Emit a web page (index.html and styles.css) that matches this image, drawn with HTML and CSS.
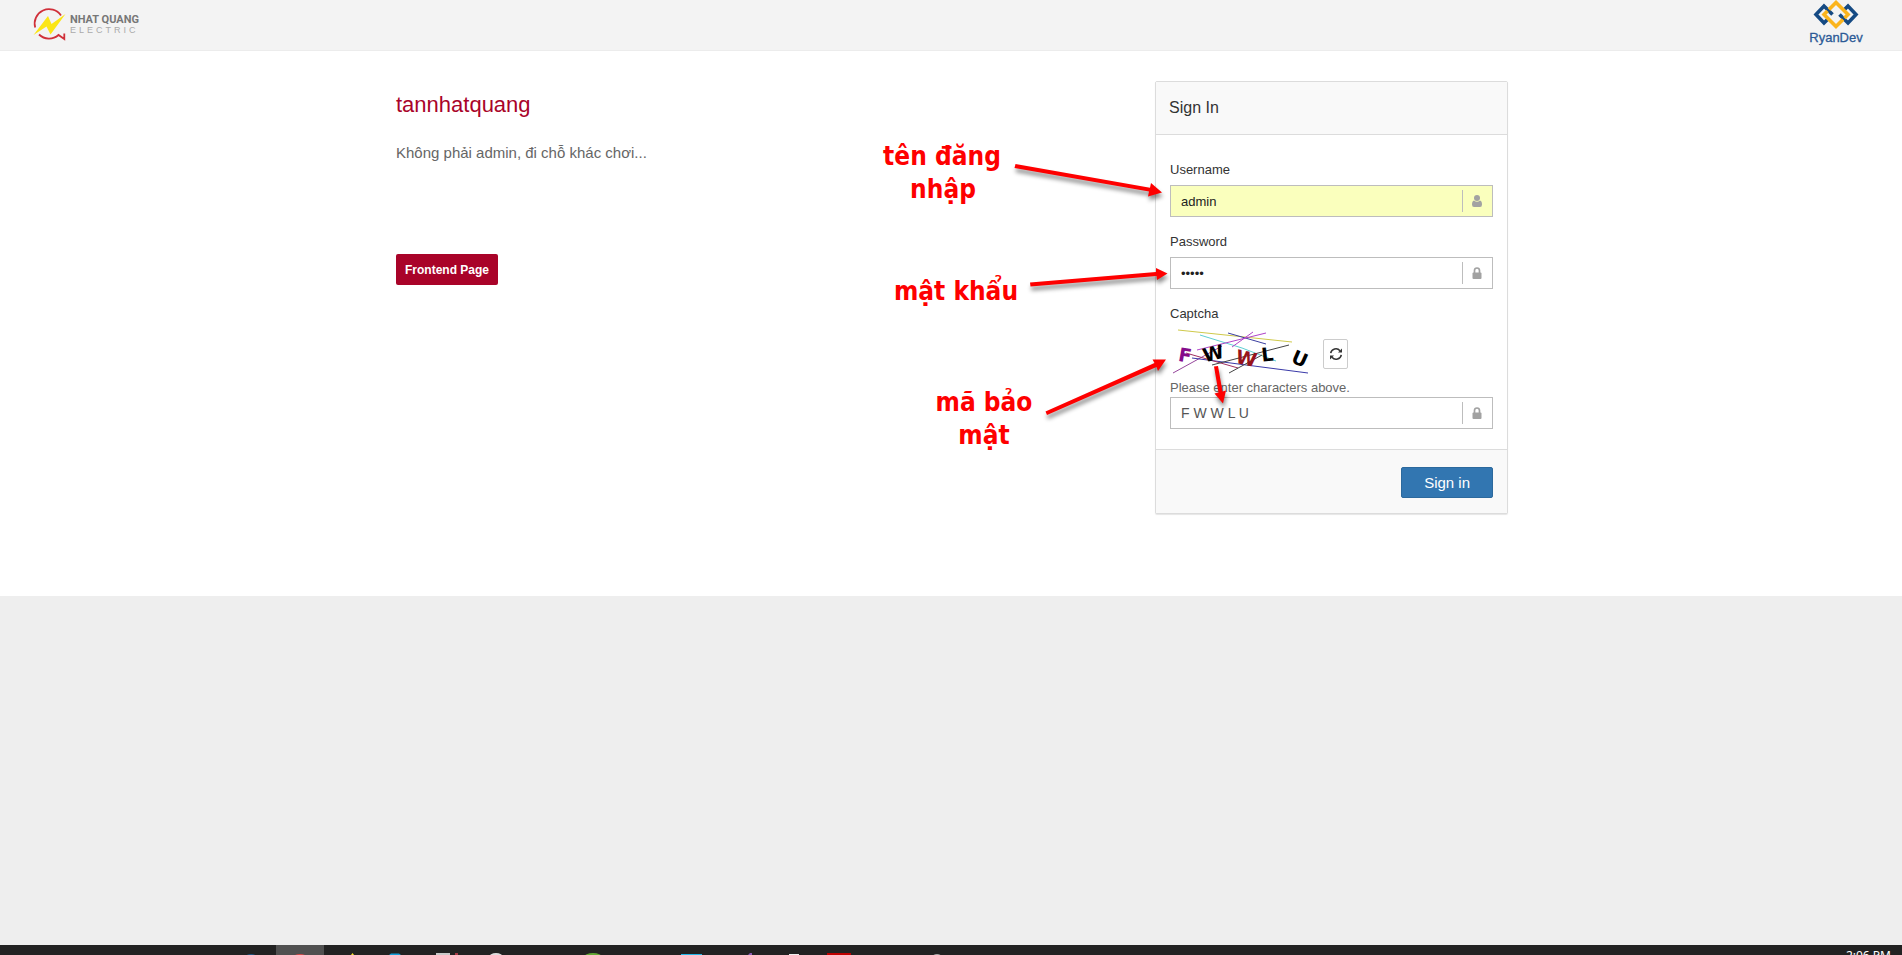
FILE: index.html
```
<!DOCTYPE html>
<html lang="vi">
<head>
<meta charset="utf-8">
<meta name="viewport" content="width=device-width, initial-scale=1">
<title>Sign In</title>
<link rel="stylesheet" href="styles.css">
</head>
<body>
<header class="topbar">
  <svg class="brand" width="112" height="36" viewBox="32 6 112 36" role="img" aria-label="Nhat Quang Electric">
    <path d="M35.200 27.500A14.400 14.400 0 0 1 61 15.500M39 34.500A14.400 14.400 0 0 0 58.500 35L64.300 39V33.500" fill="none" stroke="#d0303a" stroke-width="1.800"/>
    <path d="M33.500 35 48 16 51.500 24 65.500 14 50.500 34.500 46.500 26.500Z" fill="#fbe616"/>
    <text class="brand-name" x="70" y="23">NHAT QUANG</text>
    <text class="brand-sub" x="70" y="32.500">ELECTRIC</text>
  </svg>
  <svg class="partner" width="56" height="48" viewBox="1808 0 56 48" role="img" aria-label="RyanDev">
    <g fill="none" stroke-width="3.600">
      <path d="M1832.500 14.500 1824 6 1816 14.500 1824 23 1829 18" stroke="#154a83"/>
      <path d="M1843 11 1848 6 1856 14.500 1848 23 1839.500 14.500" stroke="#154a83"/>
      <path d="M1829 9.500 1836 2.500 1848 14.500 1844.500 18M1827.500 11 1824 14.500 1836 26.500 1843 19.500" stroke="#fbb41c"/>
    </g>
    <text class="partner-name" x="1836" y="42" text-anchor="middle">RyanDev</text>
  </svg>
</header>

<main class="main">
  <div class="container">
    <section class="intro">
      <h1 class="intro-title">tannhatquang</h1>
      <p class="intro-text">Không phải admin, đi chỗ khác chơi...</p>
      <a class="frontend-link" href="#">Frontend Page</a>
    </section>

    <form class="card">
      <h2 class="card-head">Sign In</h2>
      <div class="card-body">
        <div class="field">
          <label class="label" for="username">Username</label>
          <div class="control control-filled">
            <input class="input" id="username" type="text" value="admin">
            <span class="addon"><svg width="12" height="12" viewBox="0 0 12 12"><circle cx="6" cy="3" r="3" fill="#a2a2a2"/><path d="M3 5.500Q6 8 9 5.500 11 6 11 9.500 11 12 9 12H3Q1 12 1 9.500 1 6 3 5.500Z" fill="#a2a2a2"/></svg></span>
          </div>
        </div>
        <div class="field">
          <label class="label" for="password">Password</label>
          <div class="control">
            <input class="input" id="password" type="password" value="admin">
            <span class="addon"><svg width="12" height="12" viewBox="0 0 12 12"><path d="M3.500 6V3.500a2.500 2.500 0 0 1 5 0V6" fill="none" stroke="#a2a2a2" stroke-width="1.700"/><rect x="1.500" y="5.500" width="9" height="6.500" rx="1" fill="#a2a2a2"/></svg></span>
          </div>
        </div>
        <div class="field">
          <label class="label" for="captcha">Captcha</label>
          <div class="captcha-row">
            <svg class="captcha" width="145" height="50" viewBox="1170 328 145 50" role="img" aria-label="F W W L U">
              <g fill="none" stroke-width="1">
                <path d="M1178 329 1292 341" stroke="#cfc94a"/>
                <path d="M1200 334 1242 347 1276 360" stroke="#5ecfd2"/>
                <path d="M1228 332 1266 343" stroke="#3c3fa0"/>
                <path d="M1197 349 1266 332M1232 346 1253 331" stroke="#b044c8"/>
                <path d="M1173 372 1222 345" stroke="#96469c"/>
                <path d="M1192 357 1308 372" stroke="#3a3aa8"/>
                <path d="M1186 352 1238 367" stroke="#a03060"/>
                <path d="M1212 364 1289 344" stroke="#444"/>
                <path d="M1229 372 1262 354" stroke="#444"/>
              </g>
              <g class="captcha-text" text-anchor="middle">
                <text transform="translate(1184 361) rotate(10)" fill="#850b8b">F</text>
                <text transform="translate(1215 359) rotate(-14)">W</text>
                <text transform="translate(1245 364) rotate(12)" fill="#98131b">W</text>
                <text transform="translate(1268 360) rotate(-6)">L</text>
                <text transform="translate(1297 364) rotate(24)">U</text>
              </g>
            </svg>
            <button class="refresh" type="button" aria-label="Refresh"><svg width="14" height="14" viewBox="0 0 14 14"><path d="M1.700 6.200A5.300 5.300 0 0 1 11 3.700M12.300 7.800A5.300 5.300 0 0 1 3 10.300" fill="none" stroke="#333" stroke-width="1.500"/><path d="M13 1.500V5.500H9ZM1 12.500V8.500H5Z" fill="#333"/></svg></button>
          </div>
          <p class="hint">Please enter characters above.</p>
          <div class="control">
            <input class="input input-captcha" id="captcha" type="text" value="F W W L U">
            <span class="addon"><svg width="12" height="12" viewBox="0 0 12 12"><path d="M3.500 6V3.500a2.500 2.500 0 0 1 5 0V6" fill="none" stroke="#a2a2a2" stroke-width="1.700"/><rect x="1.500" y="5.500" width="9" height="6.500" rx="1" fill="#a2a2a2"/></svg></span>
          </div>
        </div>
      </div>
      <div class="card-foot">
        <button class="submit" type="submit">Sign in</button>
      </div>
    </form>

    <svg class="notes" width="640" height="420" viewBox="868 51 640 420">
      <g class="arrows">
        <path d="M1015.500 164 1150 187.700 1151 183 1162 192.500 1148 196.500 1149 191.500 1014.500 168Z"/>
        <path d="M1030 282.500 1156 272 1156 268 1167.500 273.500 1157 280 1156.500 276 1030.500 286.500Z"/>
        <path d="M1045.500 411.500 1154.500 363 1152.500 359.500 1166 359.500 1158 371 1156.500 367 1047 415Z"/>
        <path d="M1214 366.500 1218 366 1222.500 391.500 1226 390.500 1223 403.500 1214.500 393.500 1218.500 392.500Z"/>
      </g>
      <g class="note-text" text-anchor="middle">
        <text x="942" y="165">tên đăng</text>
        <text x="943" y="198">nhập</text>
        <text x="956" y="300">mật khẩu</text>
        <text x="984" y="411">mã bảo</text>
        <text x="984" y="444">mật</text>
      </g>
    </svg>
  </div>
</main>

<footer class="taskbar">
  <svg class="apps" width="960" height="10" viewBox="0 0 960 10" aria-hidden="true">
    <rect x="276" width="48" height="10" fill="#505050"/>
    <ellipse cx="251" cy="12" rx="6" ry="3" fill="#1d5686"/>
    <ellipse cx="300" cy="12" rx="7" ry="3" fill="#d94a4a"/>
    <path d="M351 10 352.500 8 354 10Z" fill="#f4e229"/>
    <path d="M389 10 391 8.500H399L401 10Z" fill="#149dd8"/>
    <path d="M436 8H450V10H436Z" fill="#c9c9c9"/><path d="M455 8H458V10H455Z" fill="#a83a45"/>
    <ellipse cx="496" cy="12" rx="7" ry="4" fill="#ddd"/>
    <ellipse cx="593" cy="12" rx="9" ry="4" fill="#61a834"/>
    <path d="M681 9H702V10H681Z" fill="#20b6e8"/>
    <path d="M748 10 750 8H752V10Z" fill="#8a5cb5"/>
    <path d="M789 9H799V10H789Z" fill="#eee"/>
    <path d="M827 8H851V10H827Z" fill="#bf0000"/>
    <ellipse cx="937" cy="12" rx="5" ry="3" fill="#aaa"/>
  </svg>
  <time class="clock">2:06 PM</time>
</footer>
</body>
</html>
```

FILE: styles.css
```
* {
  box-sizing: border-box;
}

body {
  margin: 0;
  min-height: 100vh;
  display: flex;
  flex-direction: column;
  background: #eee;
  color: #333;
  font: 13px/20px "Liberation Sans", Arial, sans-serif;
}

.topbar {
  display: flex;
  justify-content: space-between;
  align-items: flex-start;
  height: 51px;
  padding: 0 38px 0 32px;
  background: #f3f3f3;
  border-bottom: 1px solid #ececec;
}

.brand {
  margin-top: 6px;
}

.brand-name {
  font: bold 11px Roboto, "Liberation Sans", sans-serif;
  fill: #777;
}

.brand-sub {
  font: 9px "Liberation Sans", sans-serif;
  letter-spacing: 3px;
  fill: #aaa;
}

.partner-name {
  font: 13px "Liberation Sans", sans-serif;
  fill: #2c5a96;
  stroke: #2c5a96;
  stroke-width: 0.3px;
}

.main {
  background: #fff;
  padding: 30px 20px 82px;
}

.container {
  position: relative;
  display: flex;
  justify-content: space-between;
  align-items: flex-start;
  max-width: 1114px;
  margin: 0 auto;
  padding-left: 2px;
}

.intro-title {
  margin: 9px 0 0;
  font-size: 22px;
  line-height: 30px;
  font-weight: normal;
  color: #a90329;
}

.intro-text {
  margin: 23px 0 91px;
  font-size: 15px;
  line-height: 20px;
  color: #666;
}

.frontend-link {
  display: inline-block;
  padding: 1px 9px 0;
  border-radius: 2px;
  background: #a90329;
  color: #fff;
  font-size: 12px;
  line-height: 30px;
  font-weight: bold;
  text-decoration: none;
}

.card {
  width: 353px;
  border: 1px solid #dcdcdc;
  border-radius: 2px;
  background: #fff;
  box-shadow: 0 1px 1px rgba(0, 0, 0, 0.1);
}

.card-head {
  margin: 0;
  padding: 14px 13px;
  border-bottom: 1px solid #dcdcdc;
  background: #f9f9f9;
  font-size: 16px;
  line-height: 24px;
  font-weight: normal;
}

.card-body {
  padding: 25px 14px 20px;
}

.field + .field {
  margin-top: 15px;
}

.label {
  display: block;
  margin-bottom: 5px;
}

.control {
  display: flex;
  align-items: center;
  height: 32px;
  border: 1px solid #bdbdbd;
  background: #fff;
}

.control-filled {
  background: #faffbd;
}

.input {
  flex: 1;
  min-width: 0;
  height: 30px;
  padding: 0 10px;
  border: 0;
  outline: 0;
  background: transparent;
  color: #222;
  font: 13px "Liberation Sans", Arial, sans-serif;
}

.input-captcha {
  color: #555;
  font-size: 14px;
}

.addon {
  display: flex;
  align-items: center;
  height: 22px;
  padding: 0 9px 0 8px;
  border-left: 1px solid #bdbdbd;
}

.captcha-row {
  display: flex;
  align-items: center;
  gap: 8px;
}

.captcha-text {
  font: bold 19px "DejaVu Sans", sans-serif;
}

.refresh {
  display: flex;
  align-items: center;
  justify-content: center;
  width: 25px;
  height: 30px;
  padding: 0;
  border: 1px solid #ccc;
  border-radius: 2px;
  background: #fff;
}

.hint {
  margin: 0;
  line-height: 18px;
  color: #666;
}

.card-foot {
  display: flex;
  justify-content: flex-end;
  padding: 17px 14px 15px;
  border-top: 1px solid #dcdcdc;
  background: #f9f9f9;
}

.submit {
  height: 31px;
  padding: 0 22px;
  border: 1px solid #2c699d;
  border-radius: 2px;
  background: #3276b1;
  color: #fff;
  font: 15px "Liberation Sans", Arial, sans-serif;
}

.notes {
  position: absolute;
  top: -30px;
  right: 0;
  pointer-events: none;
}

.arrows {
  fill: #fe0000;
  filter: drop-shadow(1px 4px 2px rgba(0, 0, 0, 0.45));
}

.note-text {
  font: bold 26px "DejaVu Sans Condensed", "Noto Sans", sans-serif;
  fill: #fe0000;
}

.taskbar {
  display: flex;
  justify-content: space-between;
  height: 10px;
  margin-top: auto;
  padding-right: 11px;
  overflow: hidden;
  background: #222;
}

.clock {
  padding-top: 3px;
  color: #fff;
  font: 12px/16px "Noto Sans", sans-serif;
}
```
